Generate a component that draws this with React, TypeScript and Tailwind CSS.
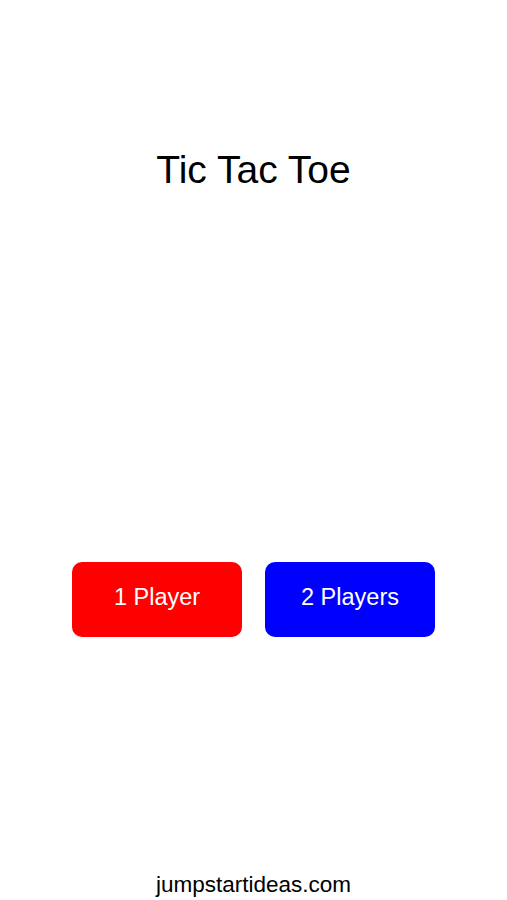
export default function App() {
  return (
    <div
      className="flex h-[900px] w-full flex-col items-center bg-white"
      style={{ fontFamily: '"Liberation Sans", Arial, sans-serif' }}
    >
      <h1 className="mt-[150px] text-[39px] leading-[40px] font-normal text-black">Tic Tac Toe</h1>
      <div className="mt-[372px] flex gap-[23px]">
        <button className="flex h-[75px] w-[170px] items-center justify-center rounded-[10px] bg-[#ff0000] pb-[3px] text-[23.5px] text-white">
          1 Player
        </button>
        <button className="flex h-[75px] w-[170px] items-center justify-center rounded-[10px] bg-[#0000ff] pb-[3px] text-[23.5px] text-white">
          2 Players
        </button>
      </div>
      <div className="mt-[237px] text-[22.5px] leading-[22px] text-black">jumpstartideas.com</div>
    </div>
  );
}
